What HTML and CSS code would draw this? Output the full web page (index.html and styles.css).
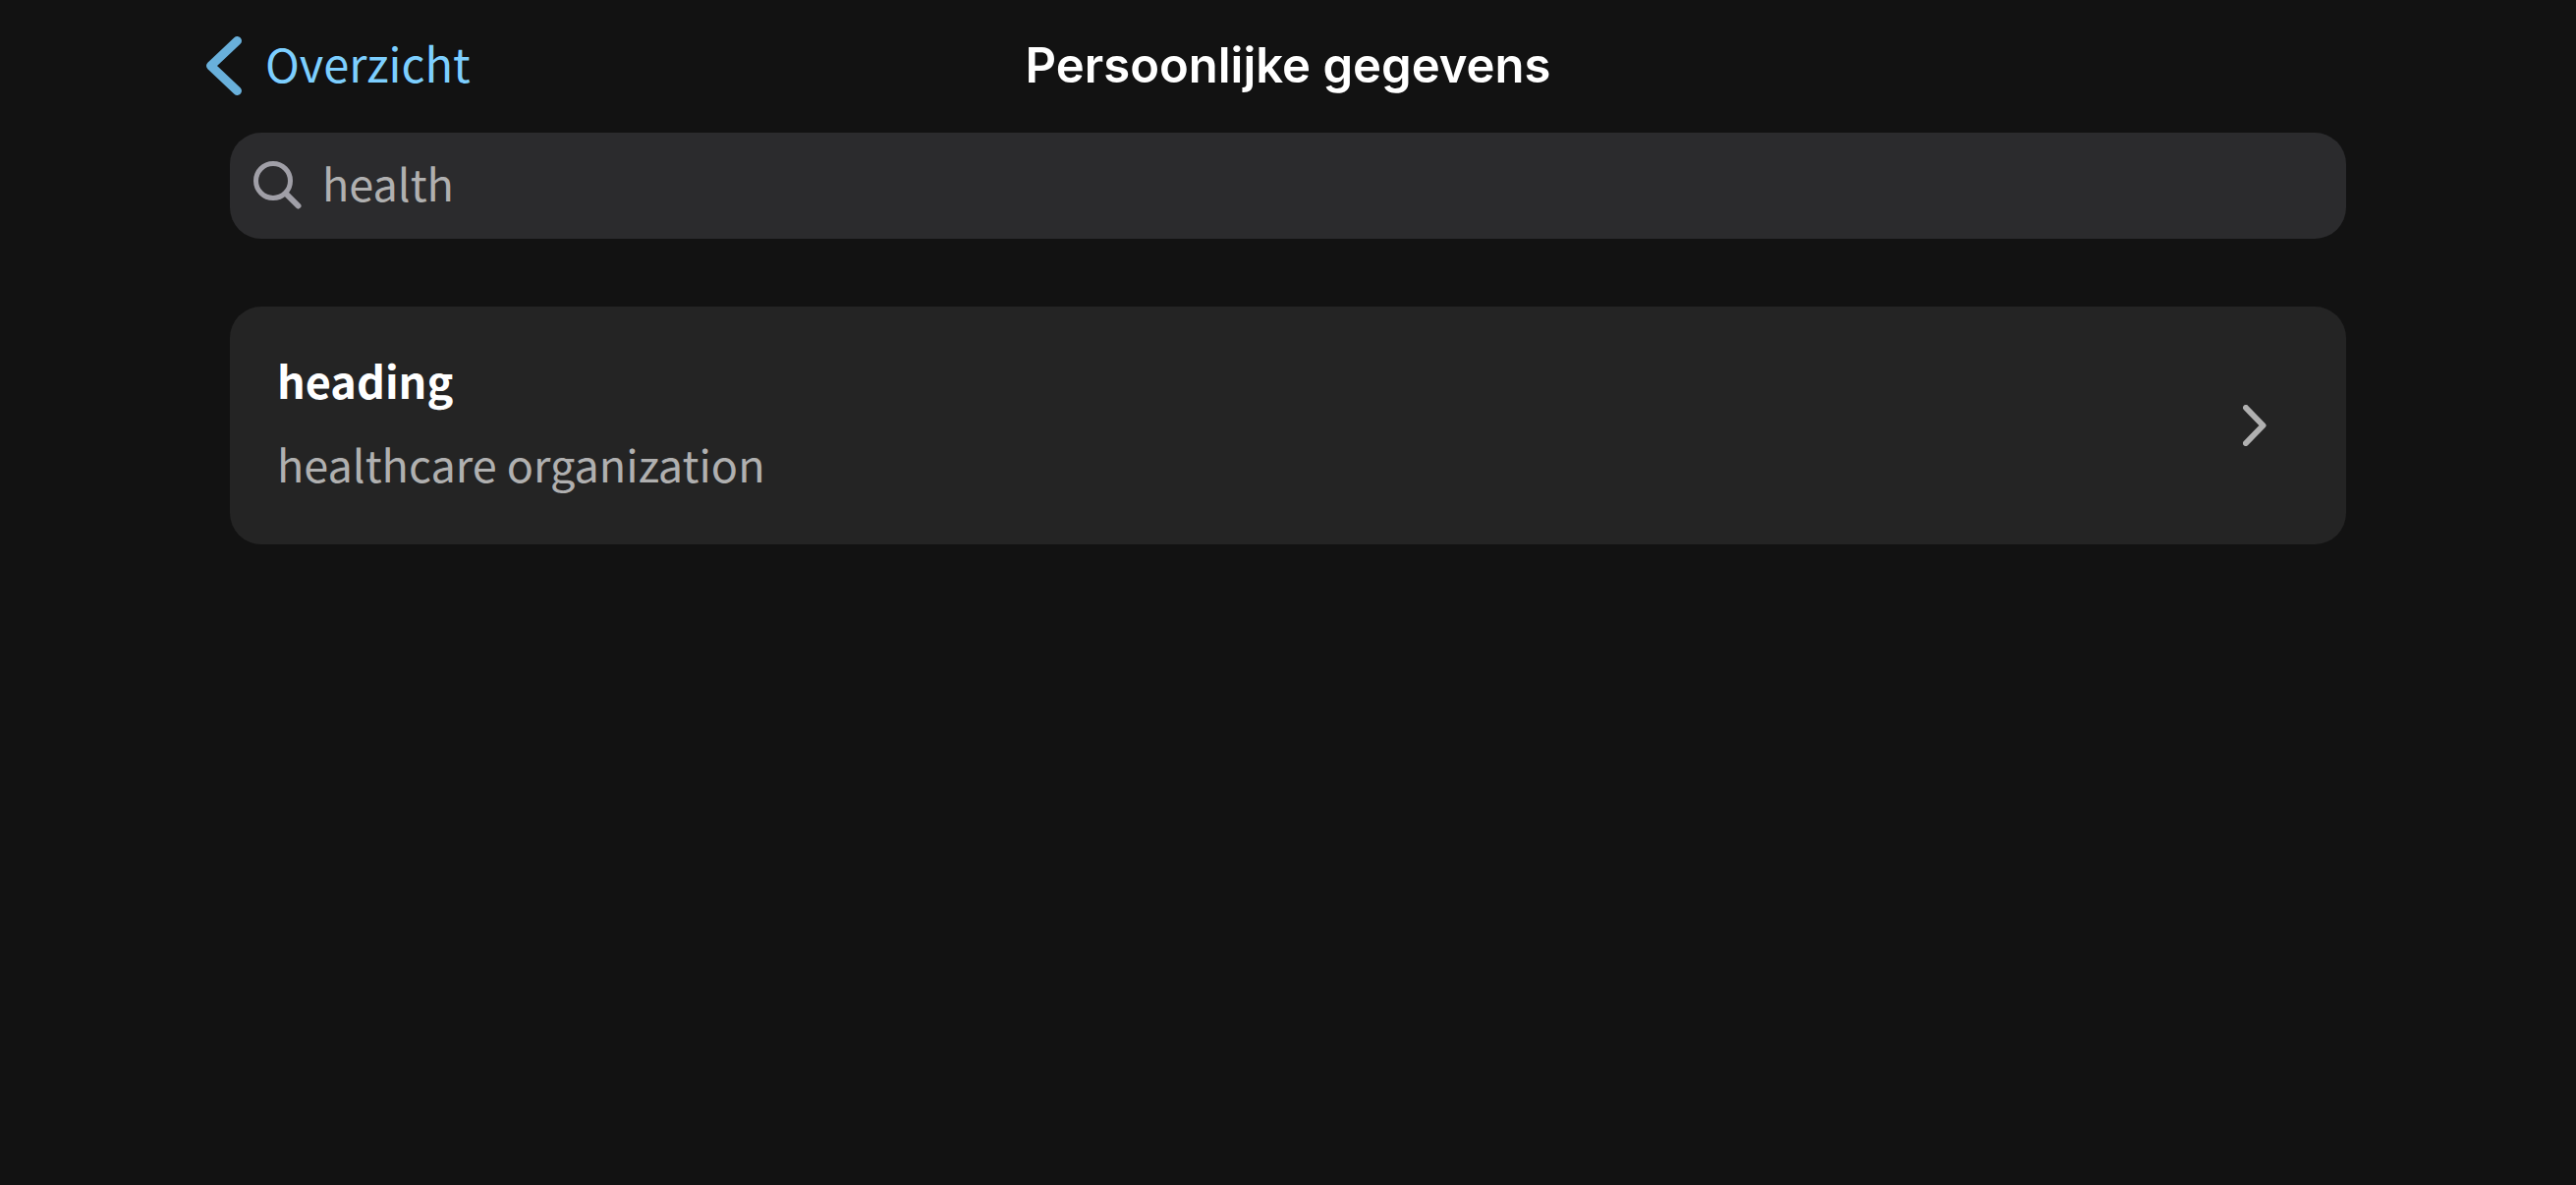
FILE: index.html
```html
<!DOCTYPE html>
<html lang="nl">
<head>
<meta charset="utf-8">
<meta name="viewport" content="width=device-width, initial-scale=1">
<title>Persoonlijke gegevens</title>
<link rel="stylesheet" href="styles.css">
</head>
<body>
<header class="navbar">
  <a class="back" href="#overzicht">
    <svg class="back-icon" viewBox="0 0 36 60" aria-hidden="true"><path d="M31.500 4.500 L4.500 30 L31.500 55.500"/></svg>
    <span class="back-label">Overzicht</span>
  </a>
  <h1 class="title">Persoonlijke gegevens</h1>
</header>
<main class="content">
  <label class="search">
    <svg class="search-icon" viewBox="0 0 50 50" aria-hidden="true"><circle cx="20" cy="20" r="17.500"/><path class="handle" d="M33 33 L45.500 45.500"/></svg>
    <input class="search-input" type="text" value="health" aria-label="Zoeken">
  </label>
  <button class="card" type="button">
    <span class="card-text">
      <span class="card-heading">heading</span>
      <span class="card-detail">healthcare organization</span>
    </span>
    <svg class="card-icon" viewBox="0 0 24 42" aria-hidden="true"><path d="M3 3 L20.500 21 L3 39"/></svg>
  </button>
</main>
</body>
</html>
```
FILE: styles.css
```css
* {
  box-sizing: border-box;
}

body {
  margin: 0;
  min-height: 100vh;
  background: #121212;
  color: #fff;
  font-family: "Noto Sans CJK SC", "Open Sans", sans-serif;
  font-size: 45px;
  line-height: 64px;
}

svg {
  display: block;
  flex: none;
  fill: none;
  stroke-linecap: round;
  stroke-linejoin: round;
}

.navbar {
  display: grid;
  grid-template-columns: 1fr auto 1fr;
  align-items: center;
  padding: 32px 210px 30px;
}

.back {
  display: flex;
  align-items: center;
  gap: 24px;
  justify-self: start;
  color: #7dcfff;
  font-size: 47px;
  text-decoration: none;
}

.back-icon {
  width: 36px;
  height: 60px;
  stroke: #69b0db;
  stroke-width: 9px;
}

.back-label {
  padding-bottom: 6px;
}

.title {
  margin: 0;
  font-family: Inter, sans-serif;
  font-size: 49px;
  font-weight: 600;
}

.content {
  display: flex;
  flex-direction: column;
  gap: 69px;
  padding: 3px 234px 48px;
}

.search {
  display: flex;
  align-items: center;
  gap: 20px;
  padding: 22px 24px;
  border-radius: 32px;
  background: #2b2b2d;
}

.search-icon {
  width: 50px;
  height: 50px;
  stroke: #a09fa7;
  stroke-width: 5px;
}

.search .handle {
  stroke-width: 6px;
}

.search-input {
  flex: 1;
  min-width: 0;
  height: 64px;
  padding: 0 0 6px;
  border: 0;
  outline: 0;
  background: none;
  color: #b0b0b0;
  font: inherit;
}

.card {
  display: flex;
  align-items: center;
  justify-content: space-between;
  padding: 43px 81px 43px 48px;
  border: 0;
  border-radius: 32px;
  background: #242424;
  color: #fff;
  font: inherit;
  text-align: left;
}

.card-text {
  display: flex;
  flex-direction: column;
  gap: 21px;
  padding-bottom: 7px;
}

.card-heading {
  font-weight: 700;
}

.card-detail {
  color: #b0b0b0;
}

.card-icon {
  width: 24px;
  height: 42px;
  stroke: #b0b0b0;
  stroke-width: 6px;
}
```
